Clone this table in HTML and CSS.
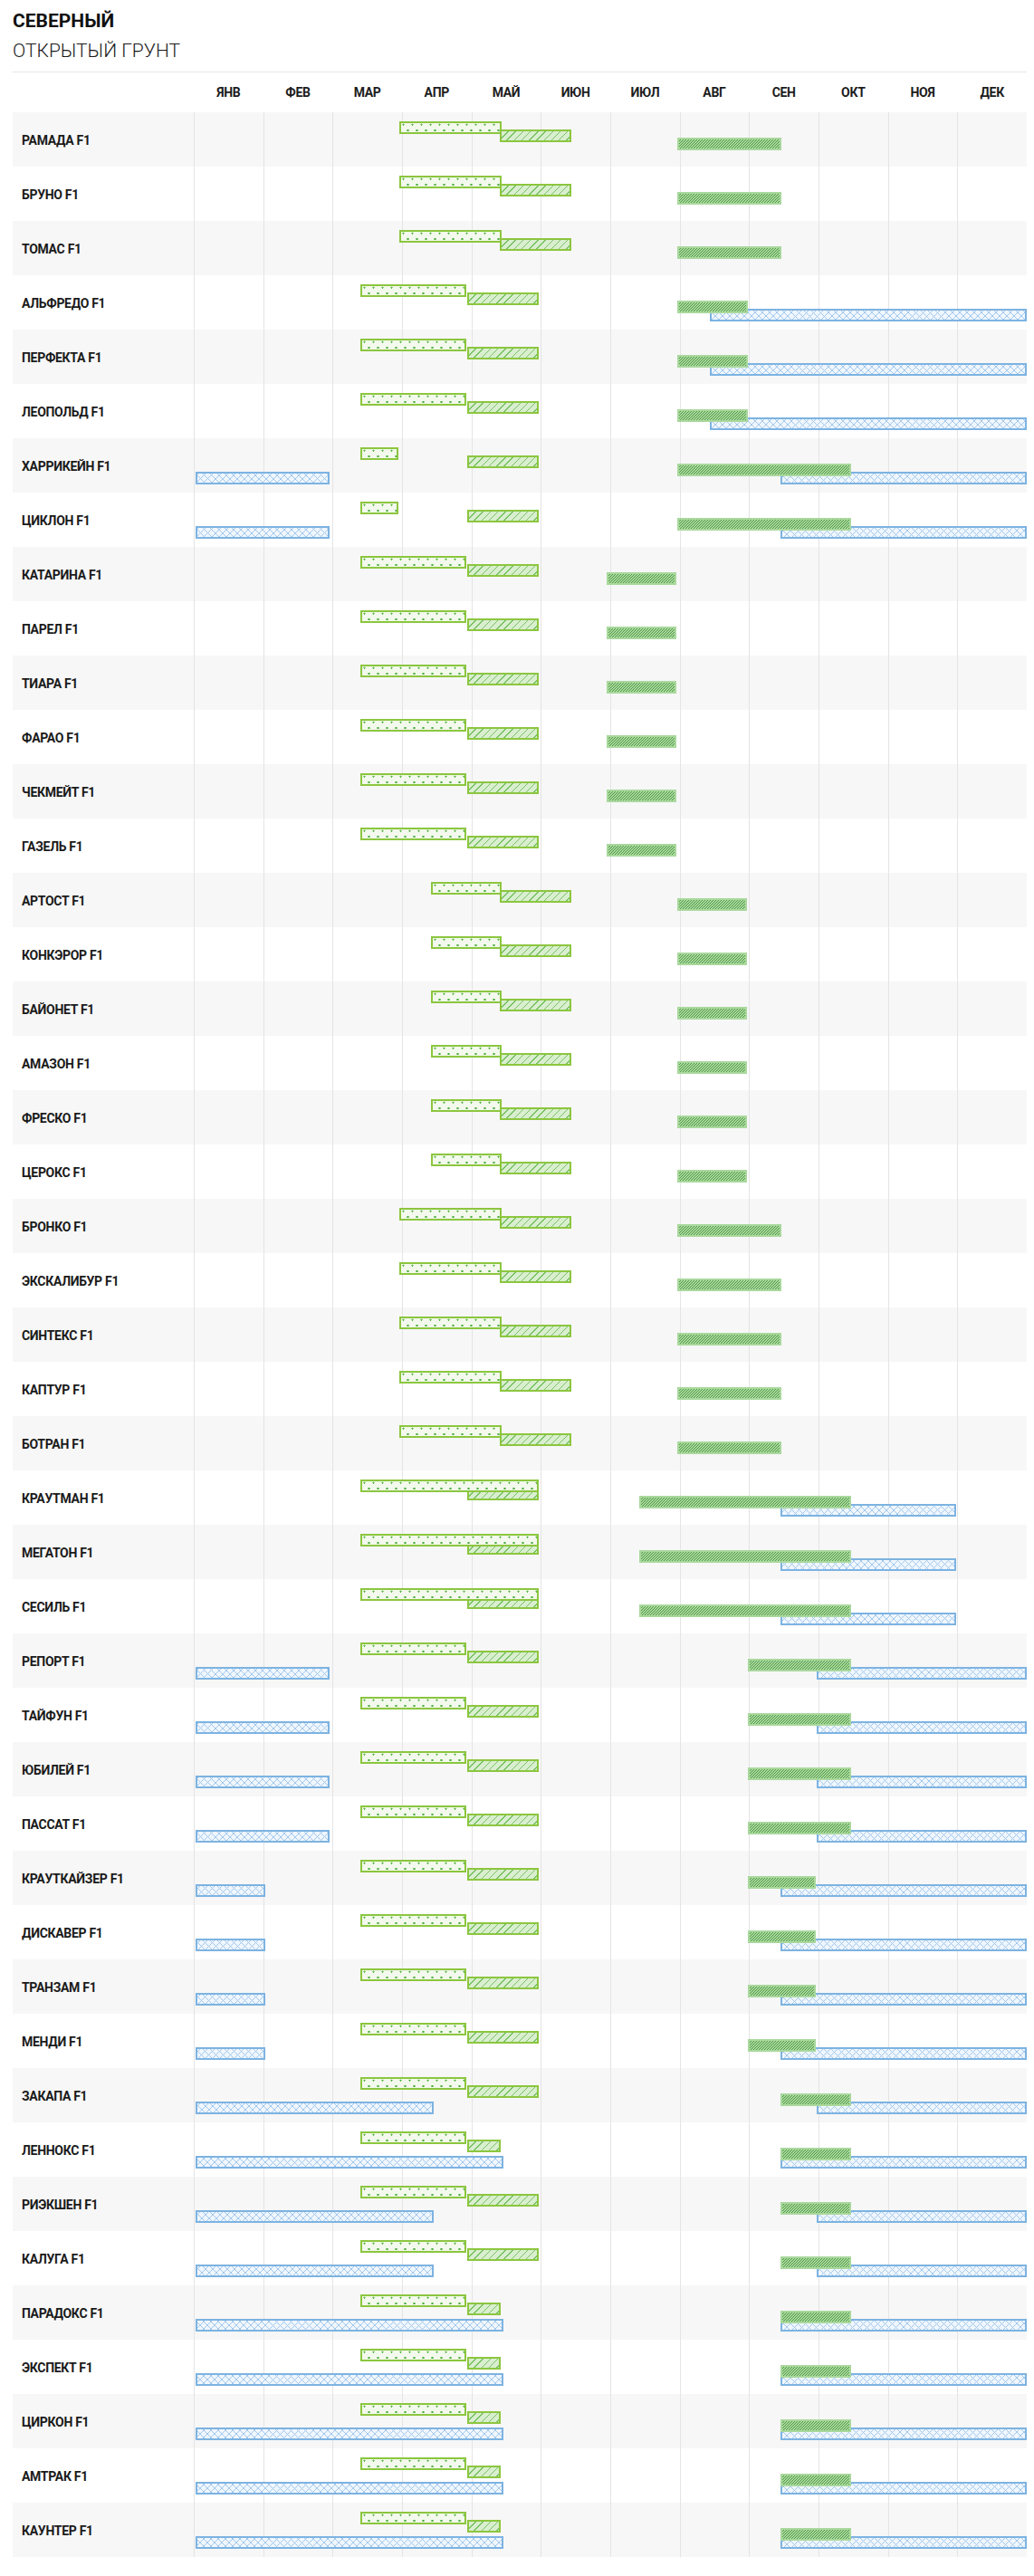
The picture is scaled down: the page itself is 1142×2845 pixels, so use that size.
FILE: index.html
```html
<!DOCTYPE html>
<html lang="ru">
<head>
<meta charset="utf-8">
<title>Северный — открытый грунт</title>
<link rel="stylesheet" href="styles.css">
</head>
<body>
<div class="page">
  <h1 class="title">СЕВЕРНЫЙ</h1>
  <h2 class="subtitle">ОТКРЫТЫЙ ГРУНТ</h2>
  <div class="chart">
    <div class="head">
      <div class="head-label"></div>
      <div class="months">
        <span>ЯНВ</span><span>ФЕВ</span><span>МАР</span><span>АПР</span><span>МАЙ</span><span>ИЮН</span><span>ИЮЛ</span><span>АВГ</span><span>СЕН</span><span>ОКТ</span><span>НОЯ</span><span>ДЕК</span>
      </div>
    </div>
    <div class="rows">
      <div class="row"><div class="name">РАМАДА F1</div><div class="track">
        <span class="bar sow" style="left:24.658%;width:12.329%"></span>
        <span class="bar plant" style="left:36.712%;width:8.630%"></span>
        <span class="bar harvest" style="left:58.082%;width:12.466%"></span>
      </div></div>
      <div class="row"><div class="name">БРУНО F1</div><div class="track">
        <span class="bar sow" style="left:24.658%;width:12.329%"></span>
        <span class="bar plant" style="left:36.712%;width:8.630%"></span>
        <span class="bar harvest" style="left:58.082%;width:12.466%"></span>
      </div></div>
      <div class="row"><div class="name">ТОМАС F1</div><div class="track">
        <span class="bar sow" style="left:24.658%;width:12.329%"></span>
        <span class="bar plant" style="left:36.712%;width:8.630%"></span>
        <span class="bar harvest" style="left:58.082%;width:12.466%"></span>
      </div></div>
      <div class="row"><div class="name">АЛЬФРЕДО F1</div><div class="track">
        <span class="bar sow" style="left:20%;width:12.740%"></span>
        <span class="bar plant" style="left:32.877%;width:8.493%"></span>
        <span class="bar harvest" style="left:58.082%;width:8.493%"></span>
        <span class="bar store" style="left:61.918%;width:38.082%"></span>
      </div></div>
      <div class="row"><div class="name">ПЕРФЕКТА F1</div><div class="track">
        <span class="bar sow" style="left:20%;width:12.740%"></span>
        <span class="bar plant" style="left:32.877%;width:8.493%"></span>
        <span class="bar harvest" style="left:58.082%;width:8.493%"></span>
        <span class="bar store" style="left:61.918%;width:38.082%"></span>
      </div></div>
      <div class="row"><div class="name">ЛЕОПОЛЬД F1</div><div class="track">
        <span class="bar sow" style="left:20%;width:12.740%"></span>
        <span class="bar plant" style="left:32.877%;width:8.493%"></span>
        <span class="bar harvest" style="left:58.082%;width:8.493%"></span>
        <span class="bar store" style="left:61.918%;width:38.082%"></span>
      </div></div>
      <div class="row"><div class="name">ХАРРИКЕЙН F1</div><div class="track">
        <span class="bar store" style="left:0.192%;width:16.137%"></span>
        <span class="bar sow" style="left:20%;width:4.548%"></span>
        <span class="bar plant" style="left:32.877%;width:8.493%"></span>
        <span class="bar harvest" style="left:58.082%;width:20.822%"></span>
        <span class="bar store" style="left:70.411%;width:29.589%"></span>
      </div></div>
      <div class="row"><div class="name">ЦИКЛОН F1</div><div class="track">
        <span class="bar store" style="left:0.192%;width:16.137%"></span>
        <span class="bar sow" style="left:20%;width:4.548%"></span>
        <span class="bar plant" style="left:32.877%;width:8.493%"></span>
        <span class="bar harvest" style="left:58.082%;width:20.822%"></span>
        <span class="bar store" style="left:70.411%;width:29.589%"></span>
      </div></div>
      <div class="row"><div class="name">КАТАРИНА F1</div><div class="track">
        <span class="bar sow" style="left:20%;width:12.740%"></span>
        <span class="bar plant" style="left:32.877%;width:8.493%"></span>
        <span class="bar harvest" style="left:49.589%;width:8.356%"></span>
      </div></div>
      <div class="row"><div class="name">ПАРЕЛ F1</div><div class="track">
        <span class="bar sow" style="left:20%;width:12.740%"></span>
        <span class="bar plant" style="left:32.877%;width:8.493%"></span>
        <span class="bar harvest" style="left:49.589%;width:8.356%"></span>
      </div></div>
      <div class="row"><div class="name">ТИАРА F1</div><div class="track">
        <span class="bar sow" style="left:20%;width:12.740%"></span>
        <span class="bar plant" style="left:32.877%;width:8.493%"></span>
        <span class="bar harvest" style="left:49.589%;width:8.356%"></span>
      </div></div>
      <div class="row"><div class="name">ФАРАО F1</div><div class="track">
        <span class="bar sow" style="left:20%;width:12.740%"></span>
        <span class="bar plant" style="left:32.877%;width:8.493%"></span>
        <span class="bar harvest" style="left:49.589%;width:8.356%"></span>
      </div></div>
      <div class="row"><div class="name">ЧЕКМЕЙТ F1</div><div class="track">
        <span class="bar sow" style="left:20%;width:12.740%"></span>
        <span class="bar plant" style="left:32.877%;width:8.493%"></span>
        <span class="bar harvest" style="left:49.589%;width:8.356%"></span>
      </div></div>
      <div class="row"><div class="name">ГАЗЕЛЬ F1</div><div class="track">
        <span class="bar sow" style="left:20%;width:12.740%"></span>
        <span class="bar plant" style="left:32.877%;width:8.493%"></span>
        <span class="bar harvest" style="left:49.589%;width:8.356%"></span>
      </div></div>
      <div class="row"><div class="name">АРТОСТ F1</div><div class="track">
        <span class="bar sow" style="left:28.493%;width:8.493%"></span>
        <span class="bar plant" style="left:36.712%;width:8.630%"></span>
        <span class="bar harvest" style="left:58.082%;width:8.356%"></span>
      </div></div>
      <div class="row"><div class="name">КОНКЭРОР F1</div><div class="track">
        <span class="bar sow" style="left:28.493%;width:8.493%"></span>
        <span class="bar plant" style="left:36.712%;width:8.630%"></span>
        <span class="bar harvest" style="left:58.082%;width:8.356%"></span>
      </div></div>
      <div class="row"><div class="name">БАЙОНЕТ F1</div><div class="track">
        <span class="bar sow" style="left:28.493%;width:8.493%"></span>
        <span class="bar plant" style="left:36.712%;width:8.630%"></span>
        <span class="bar harvest" style="left:58.082%;width:8.356%"></span>
      </div></div>
      <div class="row"><div class="name">АМАЗОН F1</div><div class="track">
        <span class="bar sow" style="left:28.493%;width:8.493%"></span>
        <span class="bar plant" style="left:36.712%;width:8.630%"></span>
        <span class="bar harvest" style="left:58.082%;width:8.356%"></span>
      </div></div>
      <div class="row"><div class="name">ФРЕСКО F1</div><div class="track">
        <span class="bar sow" style="left:28.493%;width:8.493%"></span>
        <span class="bar plant" style="left:36.712%;width:8.630%"></span>
        <span class="bar harvest" style="left:58.082%;width:8.356%"></span>
      </div></div>
      <div class="row"><div class="name">ЦЕРОКС F1</div><div class="track">
        <span class="bar sow" style="left:28.493%;width:8.493%"></span>
        <span class="bar plant" style="left:36.712%;width:8.630%"></span>
        <span class="bar harvest" style="left:58.082%;width:8.356%"></span>
      </div></div>
      <div class="row"><div class="name">БРОНКО F1</div><div class="track">
        <span class="bar sow" style="left:24.658%;width:12.329%"></span>
        <span class="bar plant" style="left:36.712%;width:8.630%"></span>
        <span class="bar harvest" style="left:58.082%;width:12.466%"></span>
      </div></div>
      <div class="row"><div class="name">ЭКСКАЛИБУР F1</div><div class="track">
        <span class="bar sow" style="left:24.658%;width:12.329%"></span>
        <span class="bar plant" style="left:36.712%;width:8.630%"></span>
        <span class="bar harvest" style="left:58.082%;width:12.466%"></span>
      </div></div>
      <div class="row"><div class="name">СИНТЕКС F1</div><div class="track">
        <span class="bar sow" style="left:24.658%;width:12.329%"></span>
        <span class="bar plant" style="left:36.712%;width:8.630%"></span>
        <span class="bar harvest" style="left:58.082%;width:12.466%"></span>
      </div></div>
      <div class="row"><div class="name">КАПТУР F1</div><div class="track">
        <span class="bar sow" style="left:24.658%;width:12.329%"></span>
        <span class="bar plant" style="left:36.712%;width:8.630%"></span>
        <span class="bar harvest" style="left:58.082%;width:12.466%"></span>
      </div></div>
      <div class="row"><div class="name">БОТРАН F1</div><div class="track">
        <span class="bar sow" style="left:24.658%;width:12.329%"></span>
        <span class="bar plant" style="left:36.712%;width:8.630%"></span>
        <span class="bar harvest" style="left:58.082%;width:12.466%"></span>
      </div></div>
      <div class="row"><div class="name">КРАУТМАН F1</div><div class="track">
        <span class="bar sow" style="left:20%;width:21.370%"></span>
        <span class="bar plant" style="left:32.877%;width:8.493%"></span>
        <span class="bar harvest" style="left:53.425%;width:25.479%"></span>
        <span class="bar store" style="left:70.411%;width:21.096%"></span>
      </div></div>
      <div class="row"><div class="name">МЕГАТОН F1</div><div class="track">
        <span class="bar sow" style="left:20%;width:21.370%"></span>
        <span class="bar plant" style="left:32.877%;width:8.493%"></span>
        <span class="bar harvest" style="left:53.425%;width:25.479%"></span>
        <span class="bar store" style="left:70.411%;width:21.096%"></span>
      </div></div>
      <div class="row"><div class="name">СЕСИЛЬ F1</div><div class="track">
        <span class="bar sow" style="left:20%;width:21.370%"></span>
        <span class="bar plant" style="left:32.877%;width:8.493%"></span>
        <span class="bar harvest" style="left:53.425%;width:25.479%"></span>
        <span class="bar store" style="left:70.411%;width:21.096%"></span>
      </div></div>
      <div class="row"><div class="name">РЕПОРТ F1</div><div class="track">
        <span class="bar store" style="left:0.192%;width:16.137%"></span>
        <span class="bar sow" style="left:20%;width:12.740%"></span>
        <span class="bar plant" style="left:32.877%;width:8.493%"></span>
        <span class="bar harvest" style="left:66.575%;width:12.329%"></span>
        <span class="bar store" style="left:74.795%;width:25.205%"></span>
      </div></div>
      <div class="row"><div class="name">ТАЙФУН F1</div><div class="track">
        <span class="bar store" style="left:0.192%;width:16.137%"></span>
        <span class="bar sow" style="left:20%;width:12.740%"></span>
        <span class="bar plant" style="left:32.877%;width:8.493%"></span>
        <span class="bar harvest" style="left:66.575%;width:12.329%"></span>
        <span class="bar store" style="left:74.795%;width:25.205%"></span>
      </div></div>
      <div class="row"><div class="name">ЮБИЛЕЙ F1</div><div class="track">
        <span class="bar store" style="left:0.192%;width:16.137%"></span>
        <span class="bar sow" style="left:20%;width:12.740%"></span>
        <span class="bar plant" style="left:32.877%;width:8.493%"></span>
        <span class="bar harvest" style="left:66.575%;width:12.329%"></span>
        <span class="bar store" style="left:74.795%;width:25.205%"></span>
      </div></div>
      <div class="row"><div class="name">ПАССАТ F1</div><div class="track">
        <span class="bar store" style="left:0.192%;width:16.137%"></span>
        <span class="bar sow" style="left:20%;width:12.740%"></span>
        <span class="bar plant" style="left:32.877%;width:8.493%"></span>
        <span class="bar harvest" style="left:66.575%;width:12.329%"></span>
        <span class="bar store" style="left:74.795%;width:25.205%"></span>
      </div></div>
      <div class="row"><div class="name">КРАУТКАЙЗЕР F1</div><div class="track">
        <span class="bar store" style="left:0.192%;width:8.411%"></span>
        <span class="bar sow" style="left:20%;width:12.740%"></span>
        <span class="bar plant" style="left:32.877%;width:8.493%"></span>
        <span class="bar harvest" style="left:66.575%;width:8.110%"></span>
        <span class="bar store" style="left:70.411%;width:29.589%"></span>
      </div></div>
      <div class="row"><div class="name">ДИСКАВЕР F1</div><div class="track">
        <span class="bar store" style="left:0.192%;width:8.411%"></span>
        <span class="bar sow" style="left:20%;width:12.740%"></span>
        <span class="bar plant" style="left:32.877%;width:8.493%"></span>
        <span class="bar harvest" style="left:66.575%;width:8.110%"></span>
        <span class="bar store" style="left:70.411%;width:29.589%"></span>
      </div></div>
      <div class="row"><div class="name">ТРАНЗАМ F1</div><div class="track">
        <span class="bar store" style="left:0.192%;width:8.411%"></span>
        <span class="bar sow" style="left:20%;width:12.740%"></span>
        <span class="bar plant" style="left:32.877%;width:8.493%"></span>
        <span class="bar harvest" style="left:66.575%;width:8.110%"></span>
        <span class="bar store" style="left:70.411%;width:29.589%"></span>
      </div></div>
      <div class="row"><div class="name">МЕНДИ F1</div><div class="track">
        <span class="bar store" style="left:0.192%;width:8.411%"></span>
        <span class="bar sow" style="left:20%;width:12.740%"></span>
        <span class="bar plant" style="left:32.877%;width:8.493%"></span>
        <span class="bar harvest" style="left:66.575%;width:8.110%"></span>
        <span class="bar store" style="left:70.411%;width:29.589%"></span>
      </div></div>
      <div class="row"><div class="name">ЗАКАПА F1</div><div class="track">
        <span class="bar store" style="left:0.192%;width:28.630%"></span>
        <span class="bar sow" style="left:20%;width:12.740%"></span>
        <span class="bar plant" style="left:32.877%;width:8.493%"></span>
        <span class="bar harvest" style="left:70.411%;width:8.493%"></span>
        <span class="bar store" style="left:74.795%;width:25.205%"></span>
      </div></div>
      <div class="row"><div class="name">ЛЕННОКС F1</div><div class="track">
        <span class="bar store" style="left:0.192%;width:36.932%"></span>
        <span class="bar sow" style="left:20%;width:12.740%"></span>
        <span class="bar plant" style="left:32.877%;width:3.973%"></span>
        <span class="bar harvest" style="left:70.411%;width:8.493%"></span>
        <span class="bar store" style="left:70.411%;width:29.589%"></span>
      </div></div>
      <div class="row"><div class="name">РИЭКШЕН F1</div><div class="track">
        <span class="bar store" style="left:0.192%;width:28.630%"></span>
        <span class="bar sow" style="left:20%;width:12.740%"></span>
        <span class="bar plant" style="left:32.877%;width:8.493%"></span>
        <span class="bar harvest" style="left:70.411%;width:8.493%"></span>
        <span class="bar store" style="left:74.795%;width:25.205%"></span>
      </div></div>
      <div class="row"><div class="name">КАЛУГА F1</div><div class="track">
        <span class="bar store" style="left:0.192%;width:28.630%"></span>
        <span class="bar sow" style="left:20%;width:12.740%"></span>
        <span class="bar plant" style="left:32.877%;width:8.493%"></span>
        <span class="bar harvest" style="left:70.411%;width:8.493%"></span>
        <span class="bar store" style="left:74.795%;width:25.205%"></span>
      </div></div>
      <div class="row"><div class="name">ПАРАДОКС F1</div><div class="track">
        <span class="bar store" style="left:0.192%;width:36.932%"></span>
        <span class="bar sow" style="left:20%;width:12.740%"></span>
        <span class="bar plant" style="left:32.877%;width:3.973%"></span>
        <span class="bar harvest" style="left:70.411%;width:8.493%"></span>
        <span class="bar store" style="left:70.411%;width:29.589%"></span>
      </div></div>
      <div class="row"><div class="name">ЭКСПЕКТ F1</div><div class="track">
        <span class="bar store" style="left:0.192%;width:36.932%"></span>
        <span class="bar sow" style="left:20%;width:12.740%"></span>
        <span class="bar plant" style="left:32.877%;width:3.973%"></span>
        <span class="bar harvest" style="left:70.411%;width:8.493%"></span>
        <span class="bar store" style="left:70.411%;width:29.589%"></span>
      </div></div>
      <div class="row"><div class="name">ЦИРКОН F1</div><div class="track">
        <span class="bar store" style="left:0.192%;width:36.932%"></span>
        <span class="bar sow" style="left:20%;width:12.740%"></span>
        <span class="bar plant" style="left:32.877%;width:3.973%"></span>
        <span class="bar harvest" style="left:70.411%;width:8.493%"></span>
        <span class="bar store" style="left:70.411%;width:29.589%"></span>
      </div></div>
      <div class="row"><div class="name">АМТРАК F1</div><div class="track">
        <span class="bar store" style="left:0.192%;width:36.932%"></span>
        <span class="bar sow" style="left:20%;width:12.740%"></span>
        <span class="bar plant" style="left:32.877%;width:3.973%"></span>
        <span class="bar harvest" style="left:70.411%;width:8.493%"></span>
        <span class="bar store" style="left:70.411%;width:29.589%"></span>
      </div></div>
      <div class="row"><div class="name">КАУНТЕР F1</div><div class="track">
        <span class="bar store" style="left:0.192%;width:36.932%"></span>
        <span class="bar sow" style="left:20%;width:12.740%"></span>
        <span class="bar plant" style="left:32.877%;width:3.973%"></span>
        <span class="bar harvest" style="left:70.411%;width:8.493%"></span>
        <span class="bar store" style="left:70.411%;width:29.589%"></span>
      </div></div>
    </div>
  </div>
</div>
</body>
</html>
```

FILE: styles.css
```css
* {
  box-sizing: border-box;
}

body {
  margin: 0;
  background: #ffffff;
  font-family: Roboto, "Liberation Sans", Arial, sans-serif;
  color: #1c1c1c;
}

.page {
  padding: 11px 8px 21px 14px;
}

.title {
  margin: 0;
  font-size: 21px;
  line-height: 24px;
  font-weight: 700;
  color: #111111;
}

.subtitle {
  margin: 9px 0 0;
  font-size: 21px;
  line-height: 24px;
  font-weight: 300;
  color: #1a1a1a;
}

.chart {
  margin-top: 11px;
  border-top: 1px solid #e6e6e6;
}

.head {
  display: grid;
  grid-template-columns: 200px 1fr;
  height: 44px;
}

.months {
  display: grid;
  grid-template-columns: repeat(12, 1fr);
}

.months span {
  text-align: center;
  font-size: 14px;
  line-height: 44px;
  font-weight: 700;
  letter-spacing: -0.3px;
  color: #1c1c1c;
}

.row {
  display: grid;
  grid-template-columns: 200px 1fr;
  height: 60px;
  background: #ffffff;
}

.row:nth-child(odd) {
  background: #f7f7f7;
}

.name {
  padding: 2px 0 0 10px;
  font-size: 14px;
  line-height: 58px;
  font-weight: 700;
  letter-spacing: -0.3px;
  white-space: nowrap;
  color: #1a1a1a;
}

.track {
  position: relative;
  background-image: repeating-linear-gradient(to right, #e4e4e4 0 1px, transparent 1px calc(100% / 12));
}

.bar {
  position: absolute;
  height: 14px;
}

.sow {
  top: 10px;
  z-index: 4;
  border: 2px solid #8cc63f;
  background-color: #f3f9ec;
  background-image:
    radial-gradient(circle at 2.5px 1.6px, #5cb84a 0.9px, transparent 1.2px),
    radial-gradient(circle at 7.5px 8px, #4cae3f 1px, transparent 1.3px);
  background-size: 10px 10px;
}

.plant {
  top: 19px;
  z-index: 3;
  border: 2px solid #8cc63f;
  background-image: repeating-linear-gradient(135deg, #d9eecf 0 4.8px, #78c264 4.8px 5.8px);
}

.harvest {
  top: 28px;
  z-index: 2;
  border: 2px solid #a9d89d;
  background-color: #a9d89d;
  background-image: repeating-linear-gradient(135deg, #a9d89d 0 1.2px, #4f9845 1.2px 2.1213px);
}

.store {
  top: 37px;
  z-index: 1;
  border: 2px solid #7db3e1;
  background-color: #eff6fd;
  background-image:
    repeating-linear-gradient(45deg, transparent 0 5px, #a3c8ec 5px 5.7px),
    repeating-linear-gradient(-45deg, transparent 0 5px, #a3c8ec 5px 5.7px);
}
```
